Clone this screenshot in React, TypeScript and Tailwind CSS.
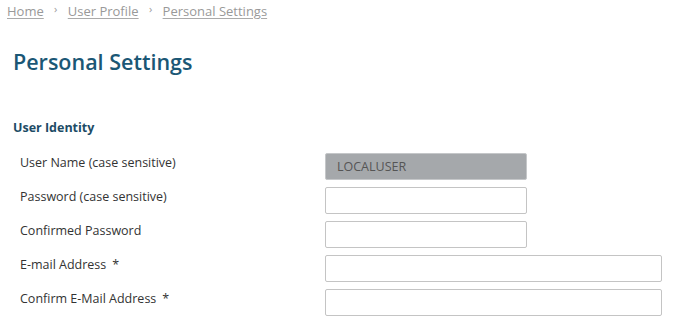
const rows = [
  { label: "User Name (case sensitive)", value: "LOCALUSER", readOnly: true, wide: false },
  { label: "Password (case sensitive)", type: "password", wide: false },
  { label: "Confirmed Password", type: "password", wide: false },
  { label: "E-mail Address", required: true, wide: true },
  { label: "Confirm E-Mail Address", required: true, wide: true },
];

function Crumb({ children }: { children: string }) {
  return (
    <a href="#" className="font-medium text-[#999] underline underline-offset-2 decoration-[#aaa]">
      {children}
    </a>
  );
}

function Sep() {
  return <span className="w-[24px] text-center text-[11px] text-[#999] -translate-y-[2px]">›</span>;
}

export default function App() {
  return (
    <div className="min-h-screen bg-white font-['Open_Sans',sans-serif] text-[13px] text-[#333]">
      <nav className="flex items-center px-[7px] pt-[1px] text-[13px] leading-[20px]">
        <Crumb>Home</Crumb>
        <Sep />
        <Crumb>User Profile</Crumb>
        <Sep />
        <Crumb>Personal Settings</Crumb>
      </nav>

      <h1 className="mt-[25px] px-[13px] text-[21.5px] font-semibold leading-8 text-[#1b5775]">Personal Settings</h1>

      <h2 className="mt-[41px] px-[13px] text-[12.5px] font-bold text-[#1d4c66]">User Identity</h2>

      <div className="mt-[15px] flex flex-col gap-[7px]">
        {rows.map((r) => (
          <div key={r.label} className="flex items-start">
            <label className="w-[325px] pl-[20px] pt-[1px] text-[12.5px] leading-[18px]">
              {r.label}
              {r.required && <span className="ml-[6px]">*</span>}
            </label>
            <input
              type={r.type ?? "text"}
              defaultValue={r.value}
              readOnly={r.readOnly}
              className={`h-[27px] ${r.wide ? "w-[337px]" : "w-[202px]"} rounded-[2px] border px-[11px] text-[12.5px] text-[#555] outline-none ${
                r.readOnly ? "border-[#c5c7c9] bg-[#a5a8ab]" : "border-[#c4c4c4] bg-white"
              }`}
            />
          </div>
        ))}
      </div>
    </div>
  );
}
